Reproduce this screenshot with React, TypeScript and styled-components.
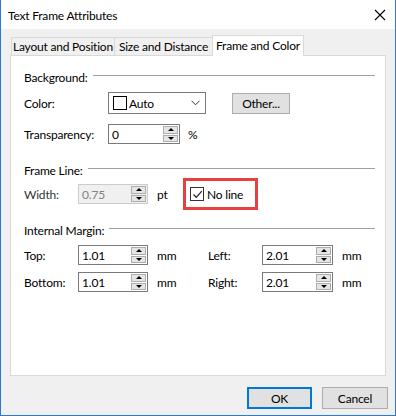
import React from 'react';
import styled, { createGlobalStyle } from 'styled-components';

const GlobalStyle = createGlobalStyle`
    html, body {
        margin: 0;
        padding: 0;
        background: #ffffff;
    }
    * {
        box-sizing: border-box;
    }
`;

function CloseIcon() {
    return (
        <svg width="12" height="12" viewBox="0 0 12 12">
            <path d="M1 1 L11 11 M11 1 L1 11" stroke="#000" strokeWidth="1.1" fill="none" />
        </svg>
    );
}

function Chevron() {
    return (
        <svg width="9" height="6" viewBox="0 0 9 6">
            <path d="M0.5 0.8 L4.5 4.8 L8.5 0.8" stroke="#333" strokeWidth="1" fill="none" />
        </svg>
    );
}

function Spinner({ value, width, disabled }: { value: string; width: number; disabled?: boolean }) {
    return (
        <SpinBox $width={width} $disabled={disabled}>
            <SpinValue $disabled={disabled}>{value}</SpinValue>
            <SpinButtons>
                <SpinBtn><Arrow $up /></SpinBtn>
                <SpinBtn><Arrow /></SpinBtn>
            </SpinButtons>
        </SpinBox>
    );
}

function GroupHeader({ title }: { title: string }) {
    return (
        <Header>
            <span>{title}</span>
            <Rule />
        </Header>
    );
}

export default function App() {
    return (
        <>
            <GlobalStyle />
            <Window>
                <TitleBar>
                    <Title>Text Frame Attributes</Title>
                    <CloseButton><CloseIcon /></CloseButton>
                </TitleBar>
                <Body>
                    <TabRow>
                        <Tab $width={104}>Layout and Position</Tab>
                        <Tab $width={99}>Size and Distance</Tab>
                        <Tab $width={92} $active>Frame and Color</Tab>
                    </TabRow>
                    <Panel>
                        <GroupHeader title="Background:" />
                        <Row $height={22} $top={7}>
                            <Label $width={84}>Color:</Label>
                            <Dropdown>
                                <Swatch />
                                <DropText>Auto</DropText>
                                <Chevron />
                            </Dropdown>
                            <Button $width={58} $height={21} $left={26}>Other...</Button>
                        </Row>
                        <Row $height={20} $top={10}>
                            <Label $width={84}>Transparency:</Label>
                            <Spinner value="0" width={72} />
                            <Unit $left={8}>%</Unit>
                        </Row>

                        <Spacer $h={18} />
                        <GroupHeader title="Frame Line:" />
                        <Row $height={32} $top={0}>
                            <Label $width={54} $muted>Width:</Label>
                            <Spinner value="0.75" width={70} disabled />
                            <Unit $left={9} $width={26}>pt</Unit>
                            <Highlight>
                                <CheckBox>
                                    <svg width="11" height="11" viewBox="0 0 11 11">
                                        <path d="M1.5 5.5 L4.3 8.3 L9.8 2.2" stroke="#222" strokeWidth="1.2" fill="none" />
                                    </svg>
                                </CheckBox>
                                <span>No line</span>
                            </Highlight>
                        </Row>

                        <Spacer $h={12} />
                        <GroupHeader title="Internal Margin:" />
                        <Row $height={20} $top={7}>
                            <Label $width={54}>Top:</Label>
                            <Spinner value="1.01" width={70} />
                            <Unit $left={9} $width={51}>mm</Unit>
                            <Label $width={54}>Left:</Label>
                            <Spinner value="2.01" width={71} />
                            <Unit $left={9}>mm</Unit>
                        </Row>
                        <Row $height={20} $top={7}>
                            <Label $width={54}>Bottom:</Label>
                            <Spinner value="1.01" width={70} />
                            <Unit $left={9} $width={51}>mm</Unit>
                            <Label $width={54}>Right:</Label>
                            <Spinner value="2.01" width={71} />
                            <Unit $left={9}>mm</Unit>
                        </Row>
                    </Panel>
                    <Footer>
                        <Button $width={65} $height={22} $primary>OK</Button>
                        <Button $width={66} $height={22} $left={10}>Cancel</Button>
                    </Footer>
                </Body>
            </Window>
        </>
    );
}

const Window = styled.div`
    width: 396px;
    height: 416px;
    display: flex;
    flex-direction: column;
    background: #f0f0f0;
    border: 1px solid #2b79d0;
    border-top: none;
    font-family: "Segoe UI", Lato, "Liberation Sans", sans-serif;
    font-size: 12px;
    letter-spacing: -0.2px;
    color: #000;
`;

const TitleBar = styled.div`
    height: 29px;
    background: #ffffff;
    display: flex;
    align-items: center;
    padding-left: 7px;
    padding-right: 9px;
`;

const Title = styled.div`
    flex: 1;
    font-size: 12px;
    padding-top: 1px;
`;

const CloseButton = styled.div`
    display: flex;
    align-items: center;
    margin-top: 1px;
`;

const Body = styled.div`
    flex: 1;
    padding: 6px 9px 0 9px;
    display: flex;
    flex-direction: column;
`;

const TabRow = styled.div`
    display: flex;
    align-items: flex-end;
    height: 20px;
    padding-left: 2px;
`;

const Tab = styled.div<{ $width: number; $active?: boolean }>`
    width: ${p => p.$width}px;
    height: ${p => (p.$active ? 21 : 18)}px;
    margin-left: -1px;
    margin-bottom: ${p => (p.$active ? -1 : 0)}px;
    border: 1px solid #d9d9d9;
    border-bottom: none;
    background: ${p => (p.$active ? '#ffffff' : '#f0f0f0')};
    position: relative;
    z-index: ${p => (p.$active ? 1 : 0)};
    display: flex;
    align-items: center;
    justify-content: center;
    padding-bottom: ${p => (p.$active ? 2 : 0)}px;
    white-space: nowrap;
`;

const Panel = styled.div`
    height: 321px;
    background: #ffffff;
    border: 1px solid #d9d9d9;
    padding: 13px 10px 0 13px;
`;

const Header = styled.div`
    display: flex;
    align-items: center;
    height: 16px;
`;

const Rule = styled.div`
    flex: 1;
    height: 1px;
    background: #a0a0a0;
    margin-left: 5px;
    margin-top: -3px;
`;

const Spacer = styled.div<{ $h: number }>`
    height: ${p => p.$h}px;
`;

const Row = styled.div<{ $height: number; $top: number }>`
    display: flex;
    align-items: center;
    height: ${p => p.$height}px;
    margin-top: ${p => p.$top}px;
`;

const Label = styled.div<{ $width: number; $muted?: boolean }>`
    width: ${p => p.$width}px;
    flex-shrink: 0;
    color: ${p => (p.$muted ? '#333' : '#000')};
`;

const Unit = styled.div<{ $left: number; $width?: number }>`
    margin-left: ${p => p.$left}px;
    width: ${p => (p.$width ? `${p.$width}px` : 'auto')};
    flex-shrink: 0;
`;

const Dropdown = styled.div`
    width: 98px;
    height: 22px;
    border: 1px solid #7a7a7a;
    background: #ffffff;
    display: flex;
    align-items: center;
    padding: 0 5px 0 4px;
`;

const Swatch = styled.div`
    width: 14px;
    height: 14px;
    border: 1px solid #000;
    background: #fff;
`;

const DropText = styled.span`
    flex: 1;
    margin-left: 2px;
`;

const Button = styled.div<{ $width: number; $height: number; $left?: number; $primary?: boolean }>`
    width: ${p => p.$width}px;
    height: ${p => p.$height}px;
    margin-left: ${p => p.$left || 0}px;
    background: #e1e1e1;
    border: ${p => (p.$primary ? '2px solid #0078d7' : '1px solid #adadad')};
    display: flex;
    align-items: center;
    justify-content: center;
    flex-shrink: 0;
`;

const SpinBox = styled.div<{ $width: number; $disabled?: boolean }>`
    width: ${p => p.$width}px;
    height: 20px;
    border: 1px solid ${p => (p.$disabled ? '#cccccc' : '#7a7a7a')};
    background: ${p => (p.$disabled ? '#f0f0f0' : '#ffffff')};
    display: flex;
    flex-shrink: 0;
`;

const SpinValue = styled.div<{ $disabled?: boolean }>`
    flex: 1;
    display: flex;
    align-items: center;
    padding-left: 3px;
    color: ${p => (p.$disabled ? '#838383' : '#000')};
`;

const SpinButtons = styled.div`
    width: 15px;
    display: flex;
    flex-direction: column;
    margin: 1px;
    gap: 1px;
`;

const SpinBtn = styled.div`
    flex: 1;
    background: #e5e5e5;
    border: 1px solid #adadad;
    display: flex;
    align-items: center;
    justify-content: center;
`;

const Arrow = styled.div<{ $up?: boolean }>`
    width: 0;
    height: 0;
    border-left: 3px solid transparent;
    border-right: 3px solid transparent;
    ${p => (p.$up ? 'border-bottom: 3px solid #000;' : 'border-top: 3px solid #000;')}
`;

const Highlight = styled.div`
    width: 75px;
    height: 32px;
    border: 3px solid #e8403f;
    display: flex;
    align-items: center;
    padding-left: 4px;
    gap: 3px;
`;

const CheckBox = styled.div`
    width: 14px;
    height: 14px;
    border: 1px solid #333;
    background: #fff;
    display: flex;
    align-items: center;
    justify-content: center;
`;

const Footer = styled.div`
    display: flex;
    justify-content: flex-end;
    margin-top: 11px;
    margin-right: -2px;
`;
